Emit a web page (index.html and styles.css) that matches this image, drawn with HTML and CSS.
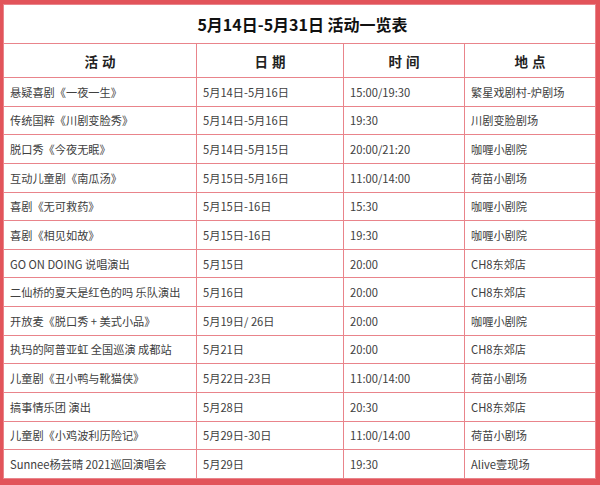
FILE: index.html
```html
<!DOCTYPE html>
<html lang="zh-CN">
<head>
<meta charset="utf-8">
<link rel="stylesheet" href="styles.css">
</head>
<body>
<div class="frame">
<table class="sched">
<colgroup>
<col class="c1"><col class="c2"><col class="c3"><col class="c4">
</colgroup>
<thead>
<tr class="title-row"><th colspan="4" class="title">5月14日-5月31日 活动一览表</th></tr>
<tr class="head-row"><th>活 动</th><th>日 期</th><th>时 间</th><th>地 点</th></tr>
</thead>
<tbody>
<tr><td>悬疑喜剧《一夜一生》</td><td>5月14日-5月16日</td><td>15:00/19:30</td><td>繁星戏剧村-炉剧场</td></tr>
<tr><td>传统国粹《川剧变脸秀》</td><td>5月14日-5月16日</td><td>19:30</td><td>川剧变脸剧场</td></tr>
<tr><td>脱口秀《今夜无眠》</td><td>5月14日-5月15日</td><td>20:00/21:20</td><td>咖喱小剧院</td></tr>
<tr><td>互动儿童剧《南瓜汤》</td><td>5月15日-5月16日</td><td>11:00/14:00</td><td>荷苗小剧场</td></tr>
<tr><td>喜剧《无可救药》</td><td>5月15日-16日</td><td>15:30</td><td>咖喱小剧院</td></tr>
<tr><td>喜剧《相见如故》</td><td>5月15日-16日</td><td>19:30</td><td>咖喱小剧院</td></tr>
<tr><td>GO ON DOING 说唱演出</td><td>5月15日</td><td>20:00</td><td>CH8东郊店</td></tr>
<tr><td>二仙桥的夏天是红色的吗 乐队演出</td><td>5月16日</td><td>20:00</td><td>CH8东郊店</td></tr>
<tr><td>开放麦《脱口秀 + 美式小品》</td><td>5月19日/ 26日</td><td>20:00</td><td>咖喱小剧院</td></tr>
<tr><td>执玛的阿普亚虹 全国巡演 成都站</td><td>5月21日</td><td>20:00</td><td>CH8东郊店</td></tr>
<tr><td>儿童剧《丑小鸭与靴猫侠》</td><td>5月22日-23日</td><td>11:00/14:00</td><td>荷苗小剧场</td></tr>
<tr><td>搞事情乐团 演出</td><td>5月28日</td><td>20:30</td><td>CH8东郊店</td></tr>
<tr><td>儿童剧《小鸡波利历险记》</td><td>5月29日-30日</td><td>11:00/14:00</td><td>荷苗小剧场</td></tr>
<tr><td>Sunnee杨芸晴 2021巡回演唱会</td><td>5月29日</td><td>19:30</td><td>Alive壹现场</td></tr>
</tbody>
</table>
</div>
</body>
</html>
```
FILE: styles.css
```css
html, body {
  margin: 0;
  padding: 0;
}
body {
  width: 600px;
  height: 485px;
  overflow: hidden;
  font-family: "Noto Sans CJK SC", "Noto Sans", sans-serif;
}
.frame {
  background: #e2545a;
  padding: 4px 5px 7px 3px;
  height: 474px;
}
.sched {
  width: 592px;
  height: 474px;
  border-collapse: collapse;
  table-layout: fixed;
  background: #fff;
}
.c1 { width: 193px; }
.c2 { width: 147px; }
.c3 { width: 121px; }
.c4 { width: 131px; }
.sched th, .sched td {
  border: 1px solid #e9848b;
  padding: 0 0 0 6px;
  white-space: nowrap;
  overflow: hidden;
}
.title-row { height: 39px; }
.head-row { height: 34px; }
.sched tbody tr { height: 28.64px; }
.title {
  font-size: 16px;
  font-weight: 700;
  color: #111;
  text-align: center;
  padding: 0;
}
.head-row th {
  font-size: 13.5px;
  font-weight: 700;
  color: #222;
  text-align: center;
  padding: 0;
  word-spacing: 1px;
}
.sched td {
  font-size: 11.2px;
  color: #404040;
  text-align: left;
}
```
